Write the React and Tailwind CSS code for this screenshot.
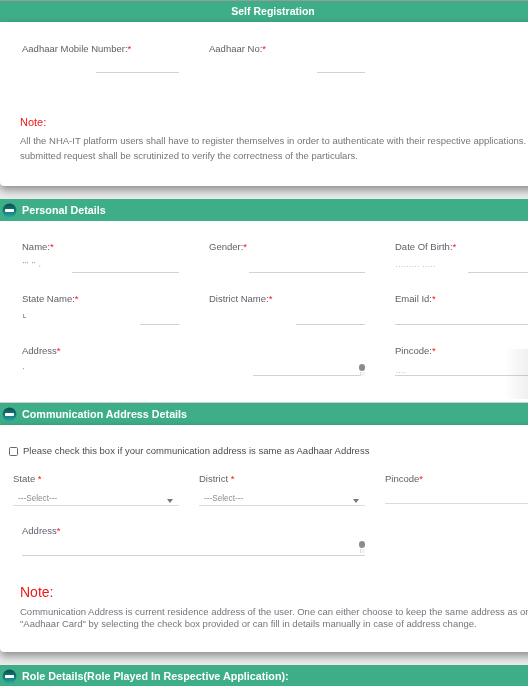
const Req = ({ children = "*" }) => <span className="text-[#f01818]">{children}</span>;

const MinusIcon = () => (
  <svg width="15" height="15" viewBox="0 0 15 15" className="shrink-0">
    <defs>
      <linearGradient id="mi" x1="0" y1="0" x2="0" y2="1">
        <stop offset="0%" stopColor="#0b4f52" />
        <stop offset="55%" stopColor="#127b7b" />
        <stop offset="100%" stopColor="#2aa8a3" />
      </linearGradient>
    </defs>
    <circle cx="7.5" cy="7.5" r="6.9" fill="url(#mi)" />
    <rect x="3" y="6" width="9" height="3" rx="0.8" fill="#fff" />
  </svg>
);

const SectionHead = ({ title }) => (
  <div className="flex h-[22px] items-center gap-[5px] bg-[#3eae88] pl-[2px] text-[10.75px] font-bold text-white">
    <MinusIcon />
    <span className="pt-px">{title}</span>
  </div>
);

const Grip = () => (
  <span className="absolute right-0 top-[-4px] flex w-[6px] flex-col items-center">
    <span className="h-[7px] w-[6px] rounded-full bg-[#8c8c8c]" />
    <span className="mt-[1px] h-[4px] w-[5px] border-l border-[#ddd] bg-[#f4f4f4]" />
  </span>
);

const Field = ({ label, lineLeft = 0, specks, specksClass = "", grip, spacer = "mt-[13px]", className = "" }) => (
  <div className={className}>
    <div className="h-[12px] text-[9.5px] leading-[12px] text-[#5e5e68]">{label}</div>
    <div className={`relative ${spacer} h-[7px]`}>
      {specks && (
        <span className={`absolute left-[1px] text-[6px] leading-[6px] tracking-[1px] text-[#444] ${specksClass}`}>{specks}</span>
      )}
      {grip && <Grip />}
    </div>
    <div className="h-px bg-[#d2d2d2]" style={{ marginLeft: lineLeft }} />
  </div>
);

const SelectField = ({ label }) => (
  <div>
    <div className="h-[12px] text-[9.5px] leading-[12px] text-[#5e5e68]">
      {label} <Req />
    </div>
    <div className="mt-[8px] flex h-[13px] items-center justify-between border-b border-[#dcdcdc] pl-[5px] pr-[6px] pt-px text-[8.2px] text-[#8a8a8a]">
      <span>---Select---</span>
      <svg width="6" height="4" viewBox="0 0 6 4" className="mt-[2px]">
        <path d="M0 0h6L3 4z" fill="#777" />
      </svg>
    </div>
  </div>
);

const App = () => (
  <div className="h-[686px] w-[528px] overflow-hidden bg-[#eaeaea] font-['Liberation_Sans',Arial,sans-serif] text-[9.5px] blur-[0.35px]">
    <div className="w-[546px]">
      <div className="h-px bg-[#999]" />
      <div className="flex h-[21px] items-center justify-center bg-[#3eae88] text-[10.5px] font-bold text-white">
        Self Registration
      </div>

      <section className="h-[164px] rounded-bl-[4px] bg-white shadow-[0_4px_8px_rgba(0,0,0,0.4)]">
        <div className="grid grid-cols-[157px_156px_1fr] gap-x-[30px] pl-[22px] pt-[21px]">
          <Field label={<>Aadhaar Mobile Number:<Req /></>} lineLeft={74} spacer="mt-[3px] pt-[14px]" />
          <Field label={<>Aadhaar No:<Req /></>} lineLeft={108} spacer="mt-[3px] pt-[14px]" />
        </div>
        <h3 className="mt-[42px] pl-[20px] text-[11px] leading-[14px] text-[#f01818]">Note:</h3>
        <p className="mt-[4px] whitespace-nowrap pl-[20px] text-[9.5px] leading-[15px] text-[#75757d]">
          All the NHA-IT platform users shall have to register themselves in order to authenticate with their respective applications.
          <br />
          submitted request shall be scrutinized to verify the correctness of the particulars.
        </p>
      </section>

      <div className="h-[13px]" />
      <SectionHead title="Personal Details" />
      <section className="relative h-[182px] border-b border-[#cfcfcf] bg-white pl-[22px] pt-[20px]">
        <div className="grid grid-cols-[157px_156px_1fr] gap-x-[30px] gap-y-[20px]">
          <Field label={<>Name:<Req /></>} lineLeft={50} spacer="mt-[12px]" specks="''' ''  ," specksClass="top-[-4px]" />
          <Field label={<>Gender:<Req /></>} lineLeft={40} spacer="mt-[12px]" />
          <Field label={<>Date Of Birth:<Req /></>} lineLeft={73} spacer="mt-[12px]" specks="......... ....." specksClass="top-[-3px]" />
          <Field label={<>State Name:<Req /></>} lineLeft={118} spacer="mt-[12px]" specks="L" specksClass="top-[-4px]" />
          <Field label={<>District Name:<Req /></>} lineLeft={87} spacer="mt-[12px]" />
          <Field label={<>Email Id:<Req /></>} spacer="mt-[12px]" />
          <Field className="col-span-2" label={<>Address<Req /></>} lineLeft={231} spacer="mt-[11px]" specks="'" specksClass="top-[-1px]" grip />
          <Field label={<>Pincode:<Req /></>} spacer="mt-[11px]" specks="...." specksClass="top-[0px]" />
        </div>
        <div className="pointer-events-none absolute right-[18px] top-[128px] h-[50px] w-[24px] bg-gradient-to-r from-transparent to-[#0000000f]" />
      </section>

      <SectionHead title="Communication Address Details" />
      <section className="h-[227px] rounded-bl-[4px] bg-white shadow-[0_4px_8px_rgba(0,0,0,0.4)]">
        <label className="flex items-center pl-[9px] pt-[20px] text-[#4a4a52]">
          <input type="checkbox" className="m-0 h-[9px] w-[9px] appearance-none rounded-[1.5px] border border-[#6a6a6a] bg-white" />
          <span className="ml-[5px] leading-[12px]">Please check this box if your communication address is same as Aadhaar Address</span>
        </label>
        <div className="mt-[16px] grid grid-cols-[166px_166px_1fr] gap-x-[20px] pl-[13px]">
          <SelectField label="State" />
          <SelectField label="District" />
          <div>
            <div className="h-[12px] text-[9.5px] leading-[12px] text-[#5e5e68]">
              Pincode<Req />
            </div>
            <div className="mt-[18px] h-px bg-[#dcdcdc]" />
          </div>
        </div>
        <div className="ml-[22px] mt-[19px] w-[343px]">
          <Field label={<>Address<Req /></>} spacer="mt-[8px] pt-[10px]" grip />
        </div>
        <h3 className="mt-[27px] pl-[20px] text-[14px] leading-[18px] text-[#f01818]">Note:</h3>
        <p className="mt-[5px] whitespace-nowrap pl-[20px] text-[9.5px] leading-[12px] text-[#75757d]">
          Communication Address is current residence address of the user. One can either choose to keep the same address as on
          <br />
          "Aadhaar Card" by selecting the check box provided or can fill in details manually in case of address change.
        </p>
      </section>

      <div className="h-[13px]" />
      <SectionHead title="Role Details(Role Played In Respective Application):" />
    </div>
  </div>
);

export default App;
